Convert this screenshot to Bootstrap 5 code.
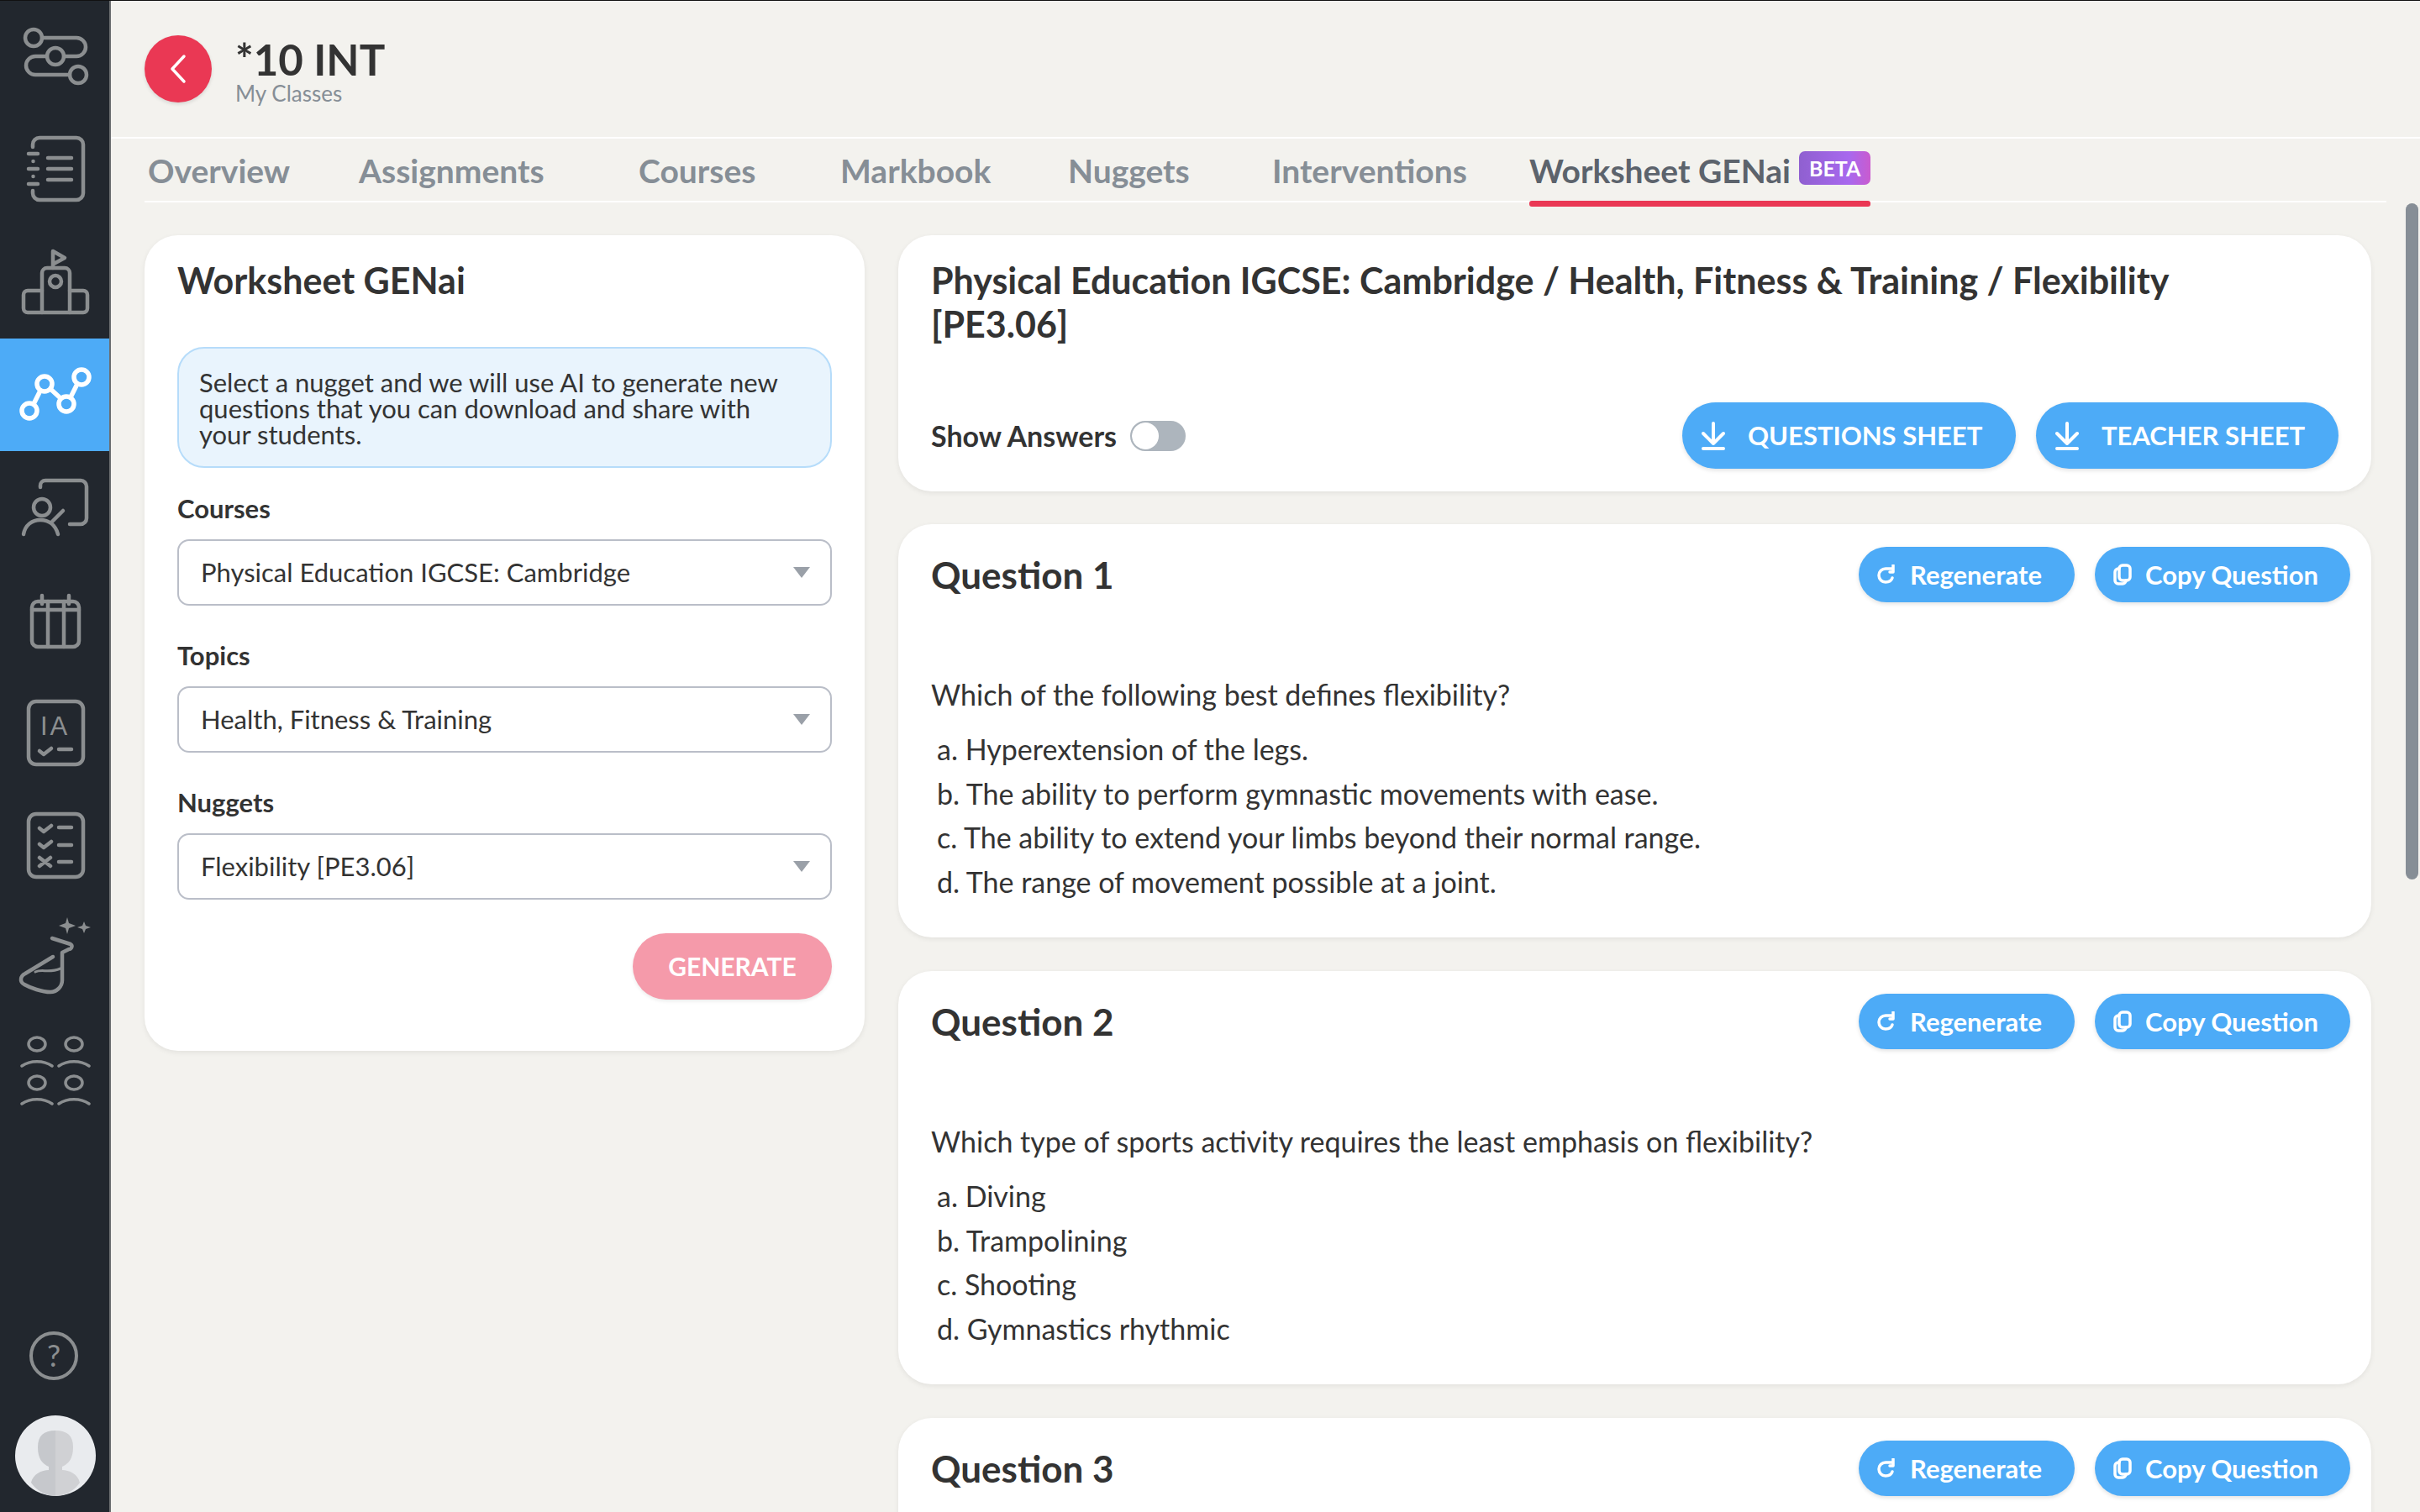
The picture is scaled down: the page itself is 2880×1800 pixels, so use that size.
<!DOCTYPE html>
<html lang="en">
<head>
    <meta charset="UTF-8">
    <title>Worksheet GENai</title>
    <link rel="stylesheet" href="https://cdn.jsdelivr.net/npm/bootstrap@5.3.0/dist/css/bootstrap.min.css">
    <style>
        html, body { height: 100%; }
        body { font-family: "Lato", "Liberation Sans", sans-serif; background: #f3f2ee; color: #333; overflow: hidden; border-top: 1px solid #111; }
        .app-shell { height: 1799px; }
        .side-rail { width: 132px; flex: 0 0 132px; background: #22272e; border-right: 2px solid #6b6e70; }
        .rail-item { display: block; width: 130px; height: 134px; }
        .rail-item svg { display: block; width: 132px; height: 134px; fill: none; stroke: #8b8e90; stroke-width: 4.5; stroke-linecap: round; stroke-linejoin: round; }
        .rail-item.is-active { background: #4dabf7; }
        .rail-item.is-active svg { stroke: #fff; stroke-width: 5.5; }
        .rail-help { width: 130px; height: 60px; margin-bottom: 41px; }
        .rail-avatar { width: 96px; height: 96px; margin: 0 0 19px 18px; }
        .main-pane { position: relative; min-width: 0; overflow: hidden; }
        .top-head { height: 164px; padding: 41px 0 0 40px; border-bottom: 2px solid #fff; }
        .back-circle { width: 80px; height: 80px; border-radius: 50%; background: #ea3854; box-shadow: 0 2px 4px rgba(0,0,0,.12); }
        .head-title { font-size: 51px; line-height: 52px; font-weight: 700; color: #333; margin-top: 3px; }
        .head-sub { font-size: 26px; line-height: 28px; color: #868e96; }
        .tab-strip { height: 76px; margin: 0 40px 0 40px; border-bottom: 2px solid #fff; flex-wrap: nowrap; }
        .tab-strip .nav-link { padding: 0 0 0 4px; height: 76px; line-height: 76px; font-size: 39px; font-weight: 700; color: #868e96; white-space: nowrap; position: relative; }
        .tab-strip .nav-item:nth-child(1) { width: 251px; }
        .tab-strip .nav-item:nth-child(2) { width: 333px; }
        .tab-strip .nav-item:nth-child(3) { width: 240px; }
        .tab-strip .nav-item:nth-child(4) { width: 271px; }
        .tab-strip .nav-item:nth-child(5) { width: 243px; }
        .tab-strip .nav-item:nth-child(6) { width: 310px; }
        .tab-strip .nav-link.active { color: #5c636c; padding-left: 0; display: flex; align-items: center; gap: 10px; }
        .tab-strip .nav-link.active::after { content: ""; position: absolute; left: 0; right: 0; bottom: -5px; height: 7px; border-radius: 3px; background: #ea3854; }
        .beta-tag { font-size: 25px; line-height: 40px; height: 40px; padding: 0 12px; margin-top: -6px; border-radius: 7px; color: #fff; font-weight: 700; background: linear-gradient(90deg, #8f60d0 0%, #a868ee 70%, #c95bcf 100%); }
        .content-wrap { padding: 39px 58px 0 40px; gap: 40px; }
        .left-col { width: 857px; flex: 0 0 857px; }
        .right-col { min-width: 0; }
        .panel { border: 0; border-radius: 40px; background: #fff; box-shadow: 0 2px 6px rgba(0,0,0,.07); }
        .left-panel { padding: 28px 39px 61px 39px; }
        .panel-head { font-size: 43px; line-height: 52px; font-weight: 700; color: #333; margin: 0; }
        .info-note { margin-top: 53px; height: 144px; padding: 25px 24px 0; border: 2px solid #b6dcfa; border-radius: 32px; background: #e9f4fd; font-size: 31px; line-height: 31px; color: #333; }
        .field-label { font-size: 31px; line-height: 40px; font-weight: 700; color: #333; margin: 39px 0 17px; display: block; }
        .field-label.is-first { margin-top: 28px; }
        .genai-select { height: 79px; padding: 0 60px 0 26px; font-size: 31px; color: #333; border: 2px solid #babec8; border-radius: 14px;
            background-image: url("data:image/svg+xml,%3csvg xmlns='http://www.w3.org/2000/svg' viewBox='0 0 20 13'%3e%3cpath fill='%239aa0a8' d='M0 0h20L10 13z'/%3e%3c/svg%3e");
            background-position: right 24px center; background-size: 20px 13px; }
        .btn-gen { height: 79px; width: 237px; margin-top: 40px; border-radius: 40px; border: 0; background: #f59aaa; color: #fff; font-size: 30px; font-weight: 700; box-shadow: 0 2px 4px rgba(0,0,0,.08); }
        .btn-gen:disabled { background: #f59aaa; color: #fff; opacity: 1; }
        .top-panel { height: 305px; padding: 28px 39px 27px 39px; margin-bottom: 39px; }
        .answers-row { margin-top: 67px; height: 79px; }
        .answers-label { font-size: 34px; font-weight: 700; color: #333; }
        .switch-wrap { padding: 0; margin: 0 0 0 16px; min-height: 0; }
        .switch-wrap .form-check-input { width: 66px; height: 36px; margin: 0; float: none; display: block; background-color: #adb5bd; border: 2px solid #adb5bd;
            --bs-form-switch-bg: url("data:image/svg+xml,%3csvg xmlns='http://www.w3.org/2000/svg' viewBox='-4 -4 8 8'%3e%3ccircle r='4' fill='%23fff'/%3e%3c/svg%3e"); }
        .btn-sky { height: 79px; padding: 0; border: 0; border-radius: 40px; background: #4dabf7; color: #fff; font-size: 31px; font-weight: 700; display: flex; align-items: center; box-shadow: 0 2px 5px rgba(0,0,0,.12); }
        .btn-sky:hover { background: #4dabf7; color: #fff; }
        .btn-sky.wide-one { width: 397px; padding-left: 23px; gap: 27px; }
        .btn-sky.wide-two { width: 360px; padding-left: 23px; gap: 27px; }
        .btn-sky svg { fill: none; stroke: #fff; stroke-width: 4; stroke-linecap: round; stroke-linejoin: round; flex: none; }
        .btn-mini { height: 66px; padding: 0; border: 0; border-radius: 33px; background: #4dabf7; color: #fff; font-size: 31px; font-weight: 700; display: flex; align-items: center; box-shadow: 0 2px 5px rgba(0,0,0,.12); }
        .btn-mini:hover { background: #4dabf7; color: #fff; }
        .btn-mini.regen { width: 257px; padding-left: 22px; gap: 17px; }
        .btn-mini.copy { width: 304px; padding-left: 22px; gap: 16px; }
        .btn-mini svg { fill: none; stroke: #fff; stroke-width: 3.5; stroke-linecap: round; stroke-linejoin: round; flex: none; }
        .question-panel { height: 492px; padding: 27px 25px 0 39px; margin-bottom: 40px; }
        .question-head { height: 66px; }
        .question-title { font-size: 44px; font-weight: 700; color: #333; margin: 0; line-height: 66px; }
        .question-text { margin-top: 85px; font-size: 34px; line-height: 50px; color: #333; }
        .option-list { margin-top: 14px; padding-left: 7px; font-size: 34px; line-height: 52.7px; color: #333; }
        .scroll-thumb { position: absolute; top: 241px; right: 2px; width: 15px; height: 805px; border-radius: 8px; background: #868e96; }
        .pointer-mark { position: absolute; left: 132px; bottom: 0; width: 10px; height: 10px; }
    </style>
</head>
<body>
<div class="app-shell d-flex">
    <nav class="side-rail d-flex flex-column">
        <a class="rail-item" href="#"><svg viewBox="0 0 132 134"><circle cx="40" cy="44" r="10"/><circle cx="66" cy="66" r="10"/><circle cx="93" cy="88" r="10"/><path d="M50 44h41a11 11 0 0 1 0 22H76"/><path d="M56 66H42a11 11 0 0 0 0 22h41"/></svg></a>
        <a class="rail-item" href="#"><svg viewBox="0 0 132 134"><path d="M39 40v-3a8 8 0 0 1 8-8h44a8 8 0 0 1 8 8v58a8 8 0 0 1-8 8H47a8 8 0 0 1-8-8v-3"/><path d="M34 48h11M34 66h11M34 84h11M39.500 57v.1M39.500 75v.1M57 53h28M57 66h28M57 79h28"/></svg></a>
        <a class="rail-item" href="#"><svg viewBox="0 0 132 134"><path d="M50 103V56a6 6 0 0 1 6-6h21a6 6 0 0 1 6 6v47"/><path d="M50 77H33a5 5 0 0 0-5 5v16a5 5 0 0 0 5 5h66a5 5 0 0 0 5-5V82a5 5 0 0 0-5-5H83"/><circle cx="66" cy="66" r="7"/><path d="M63 50V30l14 8-13 7"/></svg></a>
        <a class="rail-item is-active" href="#"><svg viewBox="0 0 132 134"><circle cx="35" cy="86" r="9"/><circle cx="53" cy="54" r="9"/><circle cx="79" cy="78" r="9"/><circle cx="97" cy="46" r="9"/><path d="M40 78l8-16M60 60l12 11M84 70l8-16"/></svg></a>
        <a class="rail-item" href="#"><svg viewBox="0 0 132 134"><path d="M48 43v-2a6 6 0 0 1 6-6h42a7 7 0 0 1 7 7v38a7 7 0 0 1-7 7H83"/><circle cx="50" cy="67" r="10"/><path d="M28 99c2-11 10-17 20-17s18 6 21 17"/><path d="M62 84l13-13"/></svg></a>
        <a class="rail-item" href="#"><svg viewBox="0 0 132 134"><rect x="38" y="45" width="56" height="54" rx="7"/><path d="M38 55h56M57 45v54M76 45v54M50 38v10M82 38v10"/></svg></a>
        <a class="rail-item" href="#"><svg viewBox="0 0 132 134"><rect x="34" y="30" width="65" height="75" rx="9"/><text x="48" y="70" font-family="Liberation Sans, sans-serif" font-size="31" letter-spacing="3" fill="#8b8e90" stroke="none">IA</text><path d="M47 89l5 4 9-7M70 87h15"/></svg></a>
        <a class="rail-item" href="#"><svg viewBox="0 0 132 134"><rect x="34" y="30" width="65" height="75" rx="9"/><path d="M47 47l5 4 9-7M47 66l5 4 9-7M47 82l13 10M60 82L47 92M70 46h15M70 67h15M70 87h15"/></svg></a>
        <a class="rail-item" href="#"><svg viewBox="0 0 132 134"><path d="M62 44l22 7c3 2 1 6-2 6l-8 4v33c0 8-7 14-14 14-10 0-24-5-31-9-6-3-5-10 1-13l33-20"/><path d="M42 84c8-4 16 2 30-4" stroke-width="3"/><path d="M80 19l2 7 8 3-8 3-2 7-2-7-8-3 8-3z" fill="#8b8e90" stroke="none"/><path d="M100 24l2 5 6 2-6 2-2 5-2-5-6-2 6-2z" fill="#8b8e90" stroke="none"/></svg></a>
        <a class="rail-item" href="#"><svg viewBox="0 0 132 134" style="stroke-width:3.5"><ellipse cx="44" cy="36" rx="10" ry="8"/><ellipse cx="88" cy="36" rx="10" ry="8"/><ellipse cx="44" cy="82" rx="10" ry="8"/><ellipse cx="88" cy="82" rx="10" ry="8"/><path d="M26 62c10-7 26-7 36 0M70 62c10-7 26-7 36 0M26 107c10-7 26-7 36 0M70 107c10-7 26-7 36 0"/></svg></a>
        <div class="mt-auto">
            <svg class="rail-help d-block" viewBox="0 0 130 60" fill="none" stroke="#8b8e90" stroke-width="4"><circle cx="64" cy="30" r="27"/><text x="64" y="43" text-anchor="middle" font-family="Lato, sans-serif" font-size="36" fill="#8b8e90" stroke="none">?</text></svg>
            <svg class="rail-avatar d-block" viewBox="0 0 96 96"><circle cx="48" cy="48" r="48" fill="#e9ebee"/><path d="M48 18c-14 0-21 6-21 20 0 14 6 20 13 23v4c-8 0-19 5-21 15 6 9 17 16 29 16z" fill="#c6c8cc"/><path d="M48 18c14 0 21 6 21 20 0 14-6 20-13 23v4c8 0 19 5 21 15-6 9-17 16-29 16z" fill="#d0d1d4"/></svg>
        </div>
    </nav>

    <main class="main-pane flex-grow-1">
        <header class="top-head d-flex align-items-start">
            <a class="back-circle d-flex align-items-center justify-content-center" href="#">
                <svg width="22" height="36" viewBox="0 0 22 36" fill="none" stroke="#fff" stroke-width="3.500" stroke-linecap="round" stroke-linejoin="round"><path d="M18 3L4 18l14 15"/></svg>
            </a>
            <div class="ms-4 ps-1">
                <div class="head-title">*10 INT</div>
                <div class="head-sub">My Classes</div>
            </div>
        </header>

        <ul class="nav tab-strip">
            <li class="nav-item"><a class="nav-link" href="#">Overview</a></li>
            <li class="nav-item"><a class="nav-link" href="#">Assignments</a></li>
            <li class="nav-item"><a class="nav-link" href="#">Courses</a></li>
            <li class="nav-item"><a class="nav-link" href="#">Markbook</a></li>
            <li class="nav-item"><a class="nav-link" href="#">Nuggets</a></li>
            <li class="nav-item"><a class="nav-link" href="#">Interventions</a></li>
            <li class="nav-item"><a class="nav-link active" href="#">Worksheet GENai <span class="beta-tag">BETA</span></a></li>
        </ul>

        <div class="content-wrap d-flex align-items-start">
            <section class="left-col">
                <div class="card panel left-panel">
                    <h5 class="panel-head">Worksheet GENai</h5>
                    <div class="info-note">Select a nugget and we will use AI to generate new<br>questions that you can download and share with<br>your students.</div>
                    <label class="field-label is-first">Courses</label>
                    <select class="form-select genai-select"><option>Physical Education IGCSE: Cambridge</option></select>
                    <label class="field-label">Topics</label>
                    <select class="form-select genai-select"><option>Health, Fitness &amp; Training</option></select>
                    <label class="field-label">Nuggets</label>
                    <select class="form-select genai-select"><option>Flexibility [PE3.06]</option></select>
                    <div class="d-flex justify-content-end">
                        <button class="btn btn-gen" disabled>GENERATE</button>
                    </div>
                </div>
            </section>

            <section class="right-col flex-grow-1">
                <div class="card panel top-panel">
                    <h5 class="panel-head">Physical Education IGCSE: Cambridge / Health, Fitness &amp; Training / Flexibility<br>[PE3.06]</h5>
                    <div class="answers-row d-flex align-items-center">
                        <span class="answers-label">Show Answers</span>
                        <div class="form-check form-switch switch-wrap"><input class="form-check-input" type="checkbox" role="switch"></div>
                        <div class="ms-auto d-flex gap-4">
                            <a class="btn btn-sky wide-one" href="#"><svg width="28" height="34" viewBox="0 0 28 34"><path d="M14 2v24M2 14l12 12 12-12M2 32h24"/></svg>QUESTIONS SHEET</a>
                            <a class="btn btn-sky wide-two" href="#"><svg width="28" height="34" viewBox="0 0 28 34"><path d="M14 2v24M2 14l12 12 12-12M2 32h24"/></svg>TEACHER SHEET</a>
                        </div>
                    </div>
                </div>

                <div class="card panel question-panel">
                    <div class="question-head d-flex align-items-center">
                        <h5 class="question-title">Question 1</h5>
                        <div class="ms-auto d-flex gap-4">
                            <a class="btn btn-mini regen" href="#"><svg width="22" height="24" viewBox="0 0 22 24"><path d="M18 5h-8a8 8 0 0 0 0 16c4 0 7-2 8-5"/><path d="M19 1v8h-4"/></svg>Regenerate</a>
                            <a class="btn btn-mini copy" href="#"><svg width="22" height="26" viewBox="0 0 22 26"><rect x="7" y="2" width="13" height="18" rx="4"/><path d="M7 6H6a4 4 0 0 0-4 4v10a4 4 0 0 0 4 4h5a4 4 0 0 0 4-4"/></svg>Copy Question</a>
                        </div>
                    </div>
                    <div class="question-text">Which of the following best defines flexibility?</div>
                    <div class="option-list">
                        <div>a. Hyperextension of the legs.</div>
                        <div>b. The ability to perform gymnastic movements with ease.</div>
                        <div>c. The ability to extend your limbs beyond their normal range.</div>
                        <div>d. The range of movement possible at a joint.</div>
                    </div>
                </div>

                <div class="card panel question-panel">
                    <div class="question-head d-flex align-items-center">
                        <h5 class="question-title">Question 2</h5>
                        <div class="ms-auto d-flex gap-4">
                            <a class="btn btn-mini regen" href="#"><svg width="22" height="24" viewBox="0 0 22 24"><path d="M18 5h-8a8 8 0 0 0 0 16c4 0 7-2 8-5"/><path d="M19 1v8h-4"/></svg>Regenerate</a>
                            <a class="btn btn-mini copy" href="#"><svg width="22" height="26" viewBox="0 0 22 26"><rect x="7" y="2" width="13" height="18" rx="4"/><path d="M7 6H6a4 4 0 0 0-4 4v10a4 4 0 0 0 4 4h5a4 4 0 0 0 4-4"/></svg>Copy Question</a>
                        </div>
                    </div>
                    <div class="question-text">Which type of sports activity requires the least emphasis on flexibility?</div>
                    <div class="option-list">
                        <div>a. Diving</div>
                        <div>b. Trampolining</div>
                        <div>c. Shooting</div>
                        <div>d. Gymnastics rhythmic</div>
                    </div>
                </div>

                <div class="card panel question-panel">
                    <div class="question-head d-flex align-items-center">
                        <h5 class="question-title">Question 3</h5>
                        <div class="ms-auto d-flex gap-4">
                            <a class="btn btn-mini regen" href="#"><svg width="22" height="24" viewBox="0 0 22 24"><path d="M18 5h-8a8 8 0 0 0 0 16c4 0 7-2 8-5"/><path d="M19 1v8h-4"/></svg>Regenerate</a>
                            <a class="btn btn-mini copy" href="#"><svg width="22" height="26" viewBox="0 0 22 26"><rect x="7" y="2" width="13" height="18" rx="4"/><path d="M7 6H6a4 4 0 0 0-4 4v10a4 4 0 0 0 4 4h5a4 4 0 0 0 4-4"/></svg>Copy Question</a>
                        </div>
                    </div>
                </div>
            </section>
        </div>
        <div class="scroll-thumb"></div>
    </main>
</div>
<script src="https://cdn.jsdelivr.net/npm/bootstrap@5.3.0/dist/js/bootstrap.bundle.min.js"></script>
</body>
</html>
